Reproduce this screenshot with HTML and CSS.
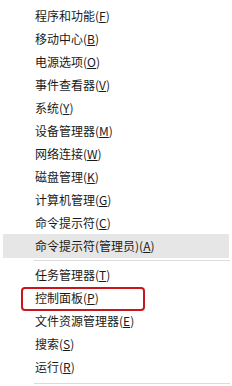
FILE: index.html
```html
<!DOCTYPE html>
<html lang="zh-CN">
<head>
    <meta charset="UTF-8">
    <meta name="viewport" content="width=device-width, initial-scale=1.0">
    <title>快速链接菜单</title>
    <link rel="stylesheet" href="styles.css">
</head>
<body>

    <div class="menu">
        <div class="menu-item">程序和功能(<u>F</u>)</div>
        <div class="menu-item">移动中心(<u>B</u>)</div>
        <div class="menu-item">电源选项(<u>O</u>)</div>
        <div class="menu-item">事件查看器(<u>V</u>)</div>
        <div class="menu-item">系统(<u>Y</u>)</div>
        <div class="menu-item">设备管理器(<u>M</u>)</div>
        <div class="menu-item">网络连接(<u>W</u>)</div>
        <div class="menu-item">磁盘管理(<u>K</u>)</div>
        <div class="menu-item">计算机管理(<u>G</u>)</div>
        <div class="menu-item">命令提示符(<u>C</u>)</div>
        <div class="menu-item is-hover">命令提示符(管理员)(<u>A</u>)</div>

        <div class="separator"></div>

        <div class="menu-item">任务管理器(<u>T</u>)</div>
        <div class="menu-item is-marked">控制面板(<u>P</u>)</div>
        <div class="menu-item">文件资源管理器(<u>E</u>)</div>
        <div class="menu-item">搜索(<u>S</u>)</div>
        <div class="menu-item">运行(<u>R</u>)</div>

        <div class="separator separator-last"></div>
        <div class="cut-off"><span class="green-tip"></span></div>
    </div>

</body>
</html>
```

FILE: styles.css
```css
body {
    font-family: "Noto Sans CJK SC", "Liberation Sans", sans-serif;
    background-color: #ffffff;
    margin: 0;
    padding: 0;
    overflow: hidden;
}
.menu {
    padding-top: 4px;
    font-size: 12px;
    color: #1a1a1a;
}
.menu-item {
    height: 23px;
    line-height: 23px;
    padding-left: 35px;
    white-space: nowrap;
}
.menu-item u {
    text-underline-offset: 1px;
}
.menu-item.is-hover {
    background-color: #e6e6e6;
    margin: 0 3px;
    padding-left: 32px;
    height: 24px;
    line-height: 24px;
}
.menu-item.is-marked {
    position: relative;
}
.menu-item.is-marked::after {
    content: "";
    position: absolute;
    left: 21px;
    top: 1px;
    width: 120px;
    height: 20px;
    border: 2px solid #c8161d;
    border-radius: 4px;
}
.separator {
    height: 1px;
    background-color: #dcdcdc;
    margin: 2px 2px 2px 34px;
}
.separator-last {
    margin-top: 5px;
}
.cut-off {
    height: 3px;
    padding-left: 104px;
}
.green-tip {
    display: block;
    width: 2px;
    height: 3px;
    background-color: #6dbb3a;
}
```
